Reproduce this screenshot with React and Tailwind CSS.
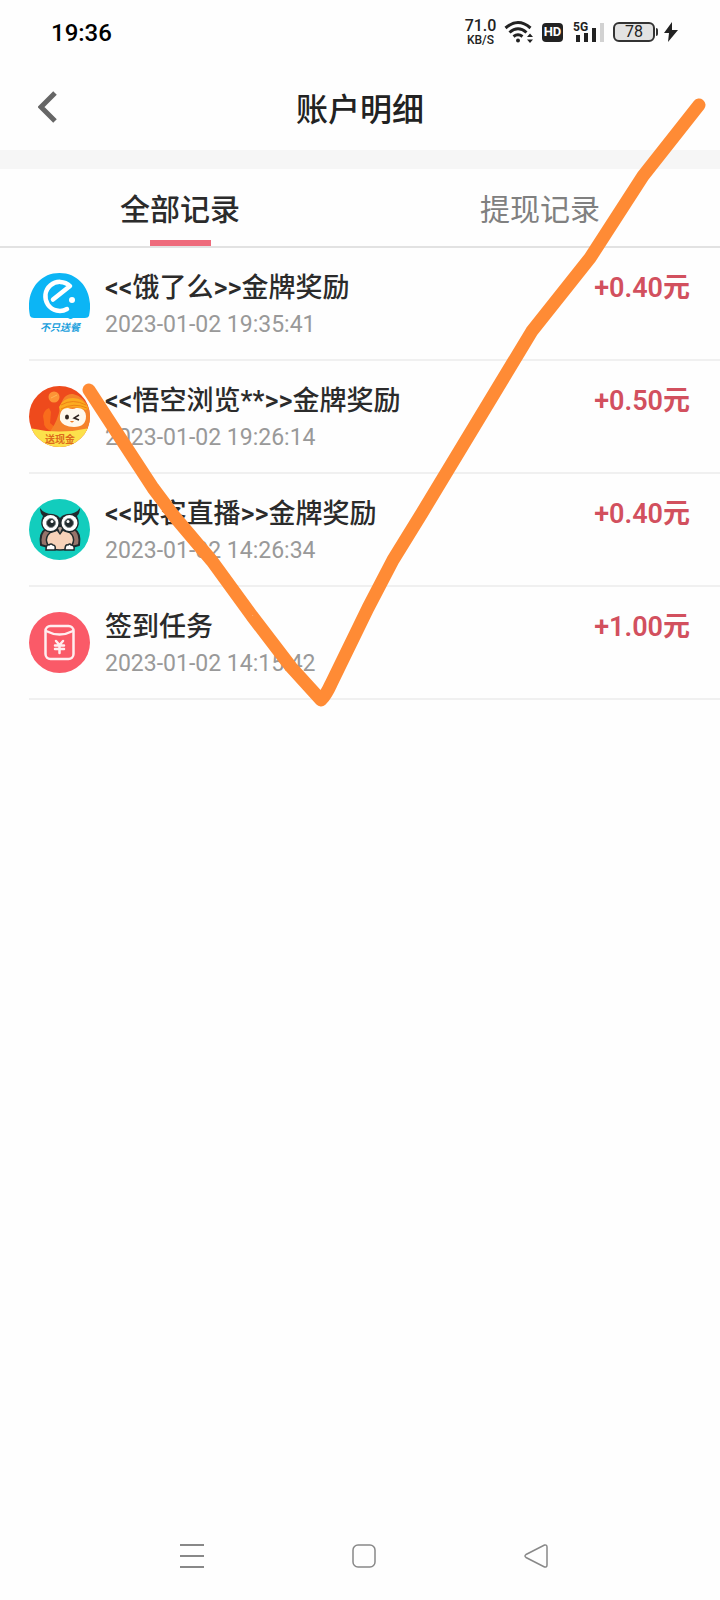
import React, { useState } from 'react';

const ElemeIcon = () => (
  <svg viewBox="0 0 61 61" className="h-[61px] w-[61px] shrink-0" aria-hidden="true">
    <path d="M1 43C-4 20 9 0 30.500 0S65 20 60 43Q59 45 56 45H44Q42 47 39 45H5Q2 45 1 43Z" fill="#0cb5f5" />
    <path d="M38 36A14.500 14.500 0 1 1 41 13L24 26.500" fill="none" stroke="#fff" strokeWidth="4.500" strokeLinecap="round" strokeLinejoin="round" />
    <circle cx="43" cy="27" r="3" fill="#fff" />
    <text x="31" y="58" textAnchor="middle" fontSize="10" fontWeight="700" fontStyle="italic" fill="#1a9fdc">不只送餐</text>
  </svg>
);

const WukongIcon = () => (
  <svg viewBox="0 0 61 61" className="h-[61px] w-[61px] shrink-0" aria-hidden="true">
    <defs>
      <clipPath id="wukong-clip"><circle cx="30.500" cy="30.500" r="30.500" /></clipPath>
    </defs>
    <g clipPath="url(#wukong-clip)">
      <rect width="61" height="61" fill="#ee4a1c" />
      <path d="M14 30Q15 24 20 22L22 26L21 37L27 42L24 46Q14 42 15 36Z" fill="#f96c1c" />
      <path d="M22 44Q29 34 31 22Q34 7 44 8Q55 10 61 24V46H22Z" fill="#f5822a" />
      <circle cx="25" cy="11" r="5.500" fill="#fd9436" />
      <path d="M22 12L28 9" stroke="#fdb458" strokeWidth="1" />
      <path d="M30 21Q34 12 44 12Q55 12 59 22L57 24Q44 18 31 25Z" fill="#fbab20" />
      <path d="M32 19Q44 12 57 19M32 23Q45 16 58 22" fill="none" stroke="#ee8215" strokeWidth="1" />
      <path d="M31 34Q30 22 39 22Q44 24 47 22Q56 21 57 30Q57 41 45 41Q34 41 31 34Z" fill="#fff8ec" />
      <ellipse cx="38" cy="31" rx="2" ry="2.500" fill="#30251f" />
      <path d="M50 29L45 32L50 34" fill="none" stroke="#30251f" strokeWidth="1.500" />
      <path d="M41 35Q43 38 45 35Z" fill="#ef7d27" />
      <path d="M0 42Q30 49 61 42V61H0Z" fill="#fce14b" />
      <text x="31" y="57" textAnchor="middle" fontSize="10" fontWeight="700" fill="#dd6a1c">送现金</text>
    </g>
  </svg>
);

const OwlIcon = () => (
  <svg viewBox="0 0 61 61" className="h-[61px] w-[61px] shrink-0" aria-hidden="true">
    <circle cx="30.500" cy="30.500" r="30.500" fill="#12cdbd" />
    <path d="M17 30Q10 34 12 46L19 48H43L50 46Q52 34 45 30Z" fill="#96736a" stroke="#202a2d" strokeWidth="2" strokeLinejoin="round" />
    <path d="M31 31C19 31 15 39 19 46Q23 51 31 51T43 46C47 39 43 31 31 31Z" fill="#f7d2b9" stroke="#202a2d" strokeWidth="1.500" />
    <path d="M11 9Q15 15 24 15Q29 16 31 19Q33 16 38 15Q47 15 51 9Q51 14 48 17Q52 25 47 31Q41 36 34 32L31 36L28 32Q21 36 15 31Q10 25 14 17Q11 14 11 9Z" fill="#202a2d" />
    <circle cx="21.500" cy="24" r="8" fill="#fff" />
    <circle cx="40.500" cy="24" r="8" fill="#fff" />
    <circle cx="22" cy="24" r="4.500" fill="#202a2d" stroke="#80888a" strokeWidth="1" />
    <circle cx="40" cy="24" r="4.500" fill="#202a2d" stroke="#80888a" strokeWidth="1" />
    <circle cx="23" cy="22.500" r="1.500" fill="#fff" />
    <circle cx="39" cy="22.500" r="1.500" fill="#fff" />
    <path d="M29 29Q31 27 33 29L31 34Z" fill="#b3a197" />
    <path d="M17 51Q17 45 20 46Q22 44 24 46Q27 46 26 51ZM36 51Q36 45 39 46Q41 44 42 46Q46 46 45 51Z" fill="#fff" stroke="#202a2d" strokeWidth="1.500" />
  </svg>
);

const CheckInIcon = () => (
  <svg viewBox="0 0 61 61" className="h-[61px] w-[61px] shrink-0" aria-hidden="true">
    <circle cx="30.500" cy="30.500" r="30.500" fill="#fa5a68" />
    <g fill="none" stroke="#ffeef0" strokeWidth="2.500" strokeLinecap="round" strokeLinejoin="round">
      <rect x="16.500" y="14" width="28" height="33" rx="5" />
      <path d="M17 19Q30.500 26 44 19" />
      <path d="M27 29L30.500 33L34 29M26 33.500H35M26 37H35M30.500 33V41" />
    </g>
  </svg>
);

const records = [
  { id: 1, title: '<<饿了么>>金牌奖励', time: '2023-01-02 19:35:41', amount: '+0.40元', Icon: ElemeIcon },
  { id: 2, title: '<<悟空浏览**>>金牌奖励', time: '2023-01-02 19:26:14', amount: '+0.50元', Icon: WukongIcon },
  { id: 3, title: '<<映客直播>>金牌奖励', time: '2023-01-02 14:26:34', amount: '+0.40元', Icon: OwlIcon },
  { id: 4, title: '签到任务', time: '2023-01-02 14:15:42', amount: '+1.00元', Icon: CheckInIcon }
];

const tabs = [
  { key: 'all', label: '全部记录' },
  { key: 'withdraw', label: '提现记录' }
];

const StatusBar = () => (
  <div className="flex h-16 items-center justify-between pl-[51px] pr-[42px] text-[#222]">
    <span className="pt-0.5 text-2xl font-medium text-black">19:36</span>
    <div className="flex items-center">
      <div className="flex w-[31px] flex-col items-center font-medium">
        <span className="text-[16px] leading-[16px]">71.0</span>
        <span className="text-[12px] leading-[12px]">KB/S</span>
      </div>
      {/* Wifi */}
      <svg viewBox="0 0 30 24" className="ml-2 h-6 w-[30px]" fill="none" stroke="#222" strokeWidth="3">
        <path d="M1.500 8Q14 -3 26.500 8M5.500 12.500Q14 5 22.500 12.500M9.500 16.500Q14 13 18.500 16.500" />
        <circle cx="14" cy="20.500" r="2" fill="#222" stroke="none" />
        <path d="M23 17L26 13.500L29 17ZM23 19.500H29L26 23Z" fill="#222" stroke="none" />
      </svg>
      <span className="ml-2 flex h-[19px] w-[21px] items-center justify-center rounded-[4px] bg-[#222] text-[13px] font-bold text-white">HD</span>
      {/* Signal */}
      <svg viewBox="0 0 32 22" className="ml-2.5 h-[22px] w-8">
        <text x="0" y="10" fontSize="12" fontWeight="700" fill="#222">5G</text>
        <path d="M3 14H7V21H3ZM11 12H15V21H11ZM19 7H23V21H19Z" fill="#222" />
        <path d="M27 2H31V21H27Z" fill="#d2d2d2" />
      </svg>
      {/* Battery */}
      <div className="ml-2 flex items-center">
        <span className="flex h-5 w-[42px] items-center justify-center rounded-[6px] border-2 border-[#333] bg-[#e2e2e2] text-[16px]">78</span>
        <span className="ml-px h-2 w-0.5 rounded-r bg-[#333]" />
      </div>
      <svg viewBox="0 0 14 20" className="ml-1.5 h-5 w-3.5" fill="#222">
        <path d="M8 0L0 11H5L4 20L14 8H8Z" />
      </svg>
    </div>
  </div>
);

const RecordRow = ({ record }) => {
  const { title, time, amount, Icon } = record;
  return (
    <li className="ml-[29px] flex h-[113px] items-start border-b-2 border-[#f0f0f0] pr-[30px] pt-[25px]">
      <Icon />
      <div className="ml-[15px] min-w-0 flex-1">
        <h2 className="text-[27px] font-medium leading-[30px] text-[#2b2b2b]">{title}</h2>
        <p className="mt-2.5 text-[23px] leading-[24px] text-[#999]">{time}</p>
      </div>
      <span className="text-[27px] font-semibold leading-[30px] text-[#d2505e]">{amount}</span>
    </li>
  );
};

const NavigationBar = () => (
  <nav className="flex h-[88px] items-center justify-center gap-[148px] pl-2">
    <button type="button" aria-label="Recent apps">
      <svg viewBox="0 0 24 24" className="h-6 w-6" stroke="#888" strokeWidth="2">
        <path d="M0 1H24M0 12H24M0 23H24" />
      </svg>
    </button>
    <button type="button" aria-label="Home">
      <svg viewBox="0 0 24 24" className="h-6 w-6" fill="none" stroke="#888" strokeWidth="1.500">
        <rect x="1" y="1" width="22" height="22" rx="5" />
      </svg>
    </button>
    <button type="button" aria-label="Back">
      <svg viewBox="0 0 24 24" className="h-6 w-6" fill="none" stroke="#888" strokeWidth="1.500">
        <path d="M2 10.500L20.500 1Q23 0.500 23 3V21Q23 23.500 20.500 23L2 13.500Q0 12 2 10.500Z" />
      </svg>
    </button>
  </nav>
);

const App = () => {
  const [activeTab, setActiveTab] = useState('all');

  return (
    <div className="relative flex min-h-screen flex-col bg-[#fefefe] font-['Roboto','Noto_Sans_CJK_SC',sans-serif]">
      <StatusBar />

      {/* Header */}
      <header className="grid h-[86px] grid-cols-[80px_1fr_80px] items-center">
        <button type="button" aria-label="返回" className="pl-[38px]">
          <svg viewBox="0 0 19 32" className="h-8 w-[19px]" fill="none" stroke="#666" strokeWidth="5">
            <path d="M17 2L3 16L17 30" />
          </svg>
        </button>
        <h1 className="pt-1.5 text-center text-[32px] font-medium text-[#222]">账户明细</h1>
      </header>

      <div className="h-[19px] bg-[#f6f6f6]" />

      {/* Tabs */}
      <div role="tablist" className="grid h-[79px] grid-cols-2 border-b-2 border-[#e2e2e2]">
        {tabs.map(tab => (
          <button
            key={tab.key}
            type="button"
            role="tab"
            aria-selected={activeTab === tab.key}
            onClick={() => setActiveTab(tab.key)}
            className={`flex flex-col items-center justify-between text-[30px] ${
              activeTab === tab.key ? 'font-medium text-[#2b2b2b]' : 'text-[#808080]'
            }`}
          >
            <span className="pt-[18px]">{tab.label}</span>
            {activeTab === tab.key && <span className="h-1.5 w-[61px] bg-[#ee6b7c]" />}
          </button>
        ))}
      </div>

      {/* Records */}
      <main className="flex-1">
        <ul>
          {records.map(record => (
            <RecordRow key={record.id} record={record} />
          ))}
        </ul>
      </main>

      <NavigationBar />

      {/* Hand-drawn tick over the list */}
      <svg
        viewBox="0 0 720 720"
        className="pointer-events-none absolute left-0 top-0 w-full"
        fill="none"
        stroke="#ff8b35"
        strokeWidth="13"
        strokeLinecap="round"
        strokeLinejoin="round"
        aria-hidden="true"
      >
        <path d="M89 390L153 488L174 516L212 561L252 616L291 667L321 700Q326 695 331 684L368 608L393 560L422 513L532 331L590 258L643 176L699 105" />
      </svg>
    </div>
  );
};

export default App;
